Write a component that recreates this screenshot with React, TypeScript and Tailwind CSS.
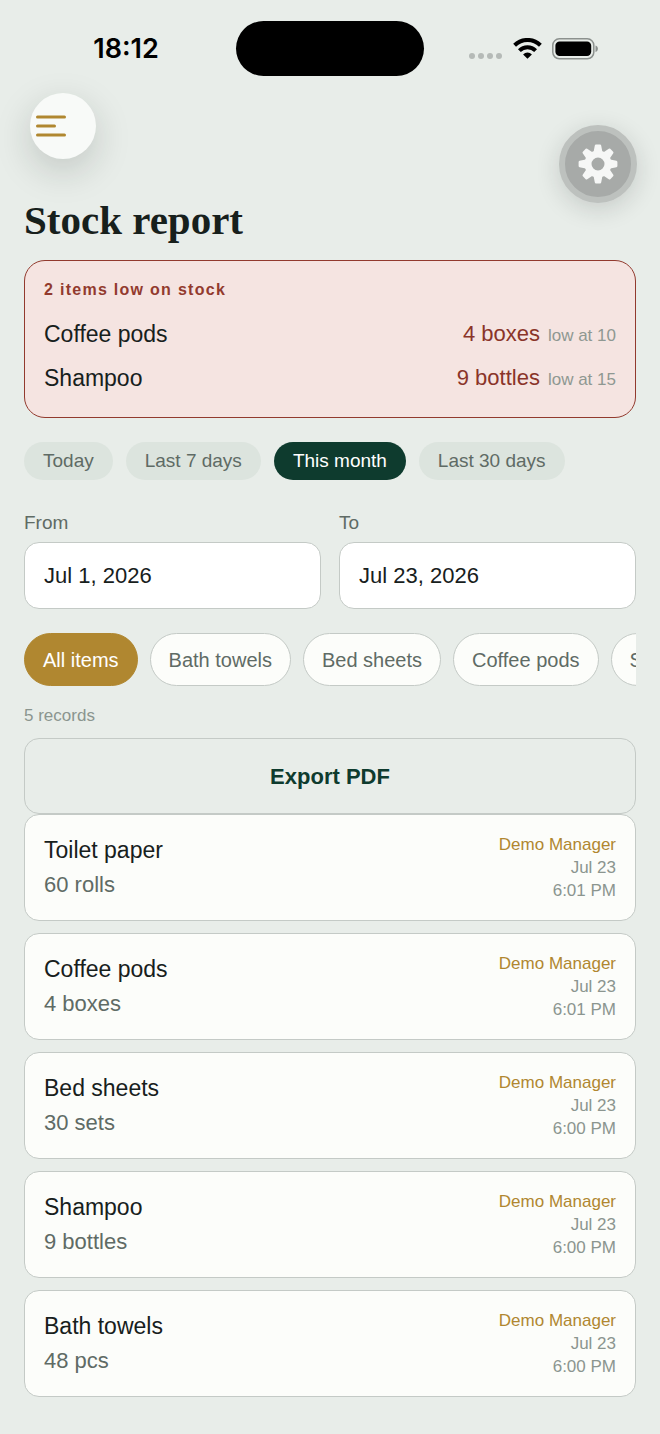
import { useState } from 'react';

interface LowItem {
  name: string;
  left: string;
  threshold: number;
}

interface StockRecord {
  id: number;
  name: string;
  quantity: string;
  author: string;
  date: string;
  time: string;
}

const LOW_ITEMS: LowItem[] = [
  { name: 'Coffee pods', left: '4 boxes', threshold: 10 },
  { name: 'Shampoo', left: '9 bottles', threshold: 15 },
];

const RANGES = ['Today', 'Last 7 days', 'This month', 'Last 30 days'];

const ITEMS = ['All items', 'Bath towels', 'Bed sheets', 'Coffee pods', 'Shampoo'];

const RECORDS: StockRecord[] = [
  { id: 1, name: 'Toilet paper', quantity: '60 rolls', author: 'Demo Manager', date: 'Jul 23', time: '6:01 PM' },
  { id: 2, name: 'Coffee pods', quantity: '4 boxes', author: 'Demo Manager', date: 'Jul 23', time: '6:01 PM' },
  { id: 3, name: 'Bed sheets', quantity: '30 sets', author: 'Demo Manager', date: 'Jul 23', time: '6:00 PM' },
  { id: 4, name: 'Shampoo', quantity: '9 bottles', author: 'Demo Manager', date: 'Jul 23', time: '6:00 PM' },
  { id: 5, name: 'Bath towels', quantity: '48 pcs', author: 'Demo Manager', date: 'Jul 23', time: '6:00 PM' },
];

function StatusBar() {
  return (
    <div className="grid grid-cols-[1fr_188px_1fr] items-center pt-[21px] text-black">
      <div className="pl-4 text-center font-['Inter',sans-serif] text-[27px] leading-8 font-semibold">18:12</div>
      <div className="h-[55px] rounded-full bg-black"></div>
      <div className="flex items-center justify-center gap-[10px] pr-[18px]">
        <svg width="34" height="22" viewBox="0 0 34 22" fill="#b5bab7">
          <circle cx="3" cy="18" r="3" />
          <circle cx="12" cy="18" r="3" />
          <circle cx="21" cy="18" r="3" />
          <circle cx="30" cy="18" r="3" />
        </svg>
        <svg width="29" height="21" viewBox="0 0 29 21">
          <g fill="none" stroke="currentColor" strokeWidth="4">
            <path d="M1.6 7.2a18.4 18.4 0 0 1 25.8 0" />
            <path d="M6.4 12.6a11.5 11.5 0 0 1 16.2 0" />
          </g>
          <path d="M14.5 20.8l-4.4-4.4a6.3 6.3 0 0 1 8.8 0z" />
        </svg>
        <svg width="46" height="22" viewBox="0 0 46 22">
          <rect x="0.8" y="0.8" width="41" height="20" rx="6.5" fill="none" stroke="#8c918e" strokeWidth="1.5" />
          <rect x="3.4" y="3.6" width="35.8" height="14.4" rx="4.2" />
          <path d="M43.5 7.5c3.2 1.2 3.2 5.4 0 6.6z" fill="#8c918e" />
        </svg>
      </div>
    </div>
  );
}

function GearIcon() {
  return (
    <svg width="40" height="40" viewBox="-20 -20 40 40" className="text-[#f6f7f6]">
      <circle r="10" fill="none" stroke="currentColor" strokeWidth="7" />
      <g fill="currentColor" stroke="currentColor" strokeWidth="2.4" strokeLinejoin="round">
        {[0, 45, 90, 135, 180, 225, 270, 315].map((angle) => (
          <path key={angle} d="M-2-18.2h4l1.2 6.2h-6.4z" transform={`rotate(${angle})`} />
        ))}
      </g>
    </svg>
  );
}

export default function App() {
  const [range, setRange] = useState('This month');
  const [item, setItem] = useState('All items');

  return (
    <div className="relative min-h-screen bg-[#e8ede9] pb-[37px] font-['Liberation_Sans',Arial,sans-serif] text-[#17201c]">
      <StatusBar />

      <header className="px-6 pt-[17px]">
        <button
          aria-label="Open menu"
          className="ml-[6px] flex size-[66px] items-center rounded-full bg-[#f8faf8] pl-[6px] shadow-[0_12px_36px_rgba(23,32,28,0.18)]"
        >
          <svg width="30" height="22" viewBox="0 0 30 22" stroke="#b08730" strokeWidth="3" strokeLinecap="round">
            <path d="M1.5 2h27M1.5 11h17M1.5 20h27" />
          </svg>
        </button>
        <h1 className="mt-9 font-['Liberation_Serif','Times_New_Roman',serif] text-[41px] leading-[50px] font-bold">
          Stock report
        </h1>
      </header>

      {/* Floating settings button */}
      <button
        aria-label="Settings"
        className="absolute top-[125px] right-[23px] flex size-[78px] items-center justify-center rounded-full border-[6px] border-[#bdc1be] bg-[#a7aaa8] shadow-[0_6px_24px_rgba(23,32,28,0.16)]"
      >
        <GearIcon />
      </button>

      <main className="px-6 pt-[15px]">
        {/* Low stock alert */}
        <section className="rounded-[21px] border border-[#923a2e] bg-[#f5e4e1] px-[19px] pt-[19px] pb-[17px]">
          <h2 className="mb-3 text-base leading-5 font-bold tracking-[0.08em] text-[#923a2e]">2 items low on stock</h2>
          {LOW_ITEMS.map((low) => (
            <div key={low.name} className="flex h-11 items-center justify-between">
              <span className="text-[23px] leading-7">{low.name}</span>
              <span className="flex items-baseline gap-2">
                <span className="text-[22px] leading-7 text-[#8a3429]">{low.left}</span>
                <span className="text-[17px] leading-6 text-[#8f9892]">low at {low.threshold}</span>
              </span>
            </div>
          ))}
        </section>

        {/* Quick ranges */}
        <div className="mt-6 flex gap-[13px] overflow-hidden">
          {RANGES.map((r) => (
            <button
              key={r}
              onClick={() => setRange(r)}
              className={`h-[38px] shrink-0 rounded-full px-[19px] text-[19px] leading-6 ${
                range === r ? 'bg-[#0e3b2e] text-white' : 'bg-[#dce4de] text-[#5f6b65]'
              }`}
            >
              {r}
            </button>
          ))}
        </div>

        {/* Date pickers */}
        <div className="mt-[30px] grid grid-cols-2 gap-[18px]">
          <div>
            <label htmlFor="from" className="mb-[6px] block text-[19px] leading-[26px] text-[#5f6b65]">From</label>
            <input
              id="from"
              type="text"
              defaultValue="Jul 1, 2026"
              className="h-[67px] w-full rounded-[15px] border border-[#c4cac6] bg-white px-[19px] text-[22px]"
            />
          </div>
          <div>
            <label htmlFor="to" className="mb-[6px] block text-[19px] leading-[26px] text-[#5f6b65]">To</label>
            <input
              id="to"
              type="text"
              defaultValue="Jul 23, 2026"
              className="h-[67px] w-full rounded-[15px] border border-[#c4cac6] bg-white px-[19px] text-[22px]"
            />
          </div>
        </div>

        {/* Item filter, scrolls sideways */}
        <div className="mt-6 flex gap-3 overflow-x-auto [scrollbar-width:none]">
          {ITEMS.map((name) => (
            <button
              key={name}
              onClick={() => setItem(name)}
              className={`h-[53px] shrink-0 rounded-full border px-[18px] text-xl leading-6 ${
                item === name
                  ? 'border-[#b08730] bg-[#b08730] text-white'
                  : 'border-[#c4cac6] bg-[#fcfdfa] text-[#5f6b65]'
              }`}
            >
              {name}
            </button>
          ))}
        </div>

        <p className="mt-[18px] text-[17px] leading-6 text-[#8b958f]">{RECORDS.length} records</p>

        <button className="mt-[10px] h-[76px] w-full rounded-[15px] border border-[#c4cac6] text-[22px] font-bold text-[#0e3b2e]">
          Export PDF
        </button>

        <ul className="flex flex-col gap-3">
          {RECORDS.map((record) => (
            <li
              key={record.id}
              className="flex items-center justify-between rounded-[15px] border border-[#c4cac6] bg-[#fcfdfa] px-[19px] py-[18px]"
            >
              <div className="flex flex-col gap-[7px]">
                <span className="text-[23px] leading-7">{record.name}</span>
                <span className="text-[22px] leading-7 text-[#5f6b65]">{record.quantity}</span>
              </div>
              <div className="flex flex-col text-right text-[17px] leading-[23px] text-[#8b958f]">
                <span className="text-[#b08730]">{record.author}</span>
                <span>{record.date}</span>
                <span>{record.time}</span>
              </div>
            </li>
          ))}
        </ul>
      </main>
    </div>
  );
}
